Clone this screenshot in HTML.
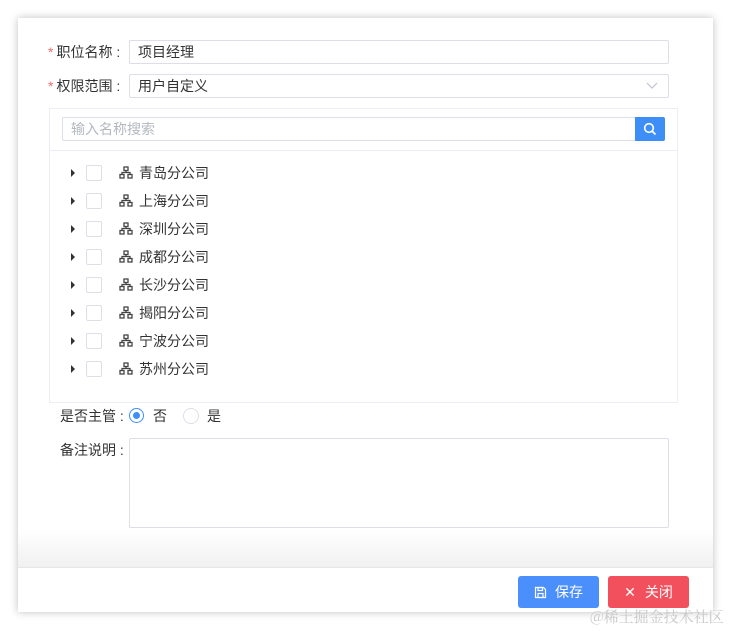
<!DOCTYPE html><html><head><meta charset="utf-8"><style>
body{margin:0;width:733px;height:631px;background:#fff;font-family:"Liberation Sans","Noto Sans CJK SC",sans-serif;font-size:14px;color:#333;position:relative;overflow:hidden}
.panel{position:absolute;left:18px;top:18px;width:695px;height:594px;background:#fff;box-shadow:0 0 8px rgba(0,0,0,.25)}
.a{position:absolute}
.lbl{position:absolute;font-size:14px;color:#333;line-height:24px}
.st{color:#f56c6c;margin-right:3px}
.inp{position:absolute;border:1px solid #dcdfe6;border-radius:2px;box-sizing:border-box;background:#fff;line-height:22px;padding-left:8px;font-size:14px}
.row{position:absolute;left:0;height:28px;line-height:28px}
.tri{position:absolute;left:71px;top:10px;width:0;height:0;border-left:4px solid #333;border-top:4px solid transparent;border-bottom:4px solid transparent}
.cb{position:absolute;left:86px;top:6px;width:14px;height:14px;border:1px solid #dcdfe6;border-radius:2px;background:#fff}
.ic{position:absolute;left:119px;top:7px}
.tx{position:absolute;left:139px;top:0;font-size:14px}
.btn{position:absolute;top:576px;height:32px;width:81px;border-radius:3px;color:#fff;font-size:14px;line-height:32px;text-align:center}
</style></head><body>
<div class="panel"></div>
<div class="a" style="left:18px;top:530px;width:695px;height:38px;background:linear-gradient(#fff,#f0f0f0)"></div>
<div class="a" style="left:18px;top:567px;width:695px;height:1px;background:#e6e6e6"></div>

<div class="lbl" style="left:48px;top:40px"><span class="st">*</span>职位名称 :</div>
<div class="inp" style="left:129px;top:40px;width:540px;height:24px">项目经理</div>
<div class="lbl" style="left:48px;top:74px"><span class="st">*</span>权限范围 :</div>
<div class="inp" style="left:129px;top:74px;width:540px;height:24px">用户自定义</div>
<svg class="a" style="left:646px;top:81px" width="12" height="10"><path d="M1 2l5 5 5-5" fill="none" stroke="#c0c4cc" stroke-width="1.2"/></svg>

<div class="a" style="left:49px;top:108px;width:629px;height:295px;border:1px solid #ebeef5;box-sizing:border-box"></div>
<div class="a" style="left:50px;top:150px;width:627px;height:1px;background:#ebeef5"></div>
<div class="inp" style="left:62px;top:117px;width:574px;height:24px;color:#b4b8bf">输入名称搜索</div>
<div class="a" style="left:635px;top:117px;width:30px;height:24px;background:#3e8ef7;border-radius:0 2px 2px 0"></div>
<svg class="a" style="left:643px;top:122px" width="14" height="14"><circle cx="6" cy="6" r="4.3" fill="none" stroke="#fff" stroke-width="1.6"/><path d="M9 9l3.5 3.5" stroke="#fff" stroke-width="1.8"/></svg>

<div id="tree"></div>
<script>
var n=["青岛","上海","深圳","成都","长沙","揭阳","宁波","苏州"],h="";
n.forEach(function(s,i){h+='<div class="row" style="top:'+(159+i*28)+'px;width:700px"><div class="tri"></div><div class="cb"></div><svg class="ic" width="14" height="13"><g fill="none" stroke="#444" stroke-width="1.3"><rect x="5" y="1" width="4" height="3.5"/><rect x="1" y="8.5" width="4" height="3.5"/><rect x="9" y="8.5" width="4" height="3.5"/><path d="M7 4.5v2M3 8.5V6.5h8v2"/></g></svg><div class="tx">'+s+'分公司</div></div>'});
document.getElementById("tree").innerHTML=h;
</script>

<div class="lbl" style="left:60px;top:404px">是否主管 :</div>
<div class="a" style="left:129px;top:408px;width:15px;height:15px;border:1px solid #3e8ef7;border-radius:50%;box-sizing:border-box;background:#fff"></div>
<div class="a" style="left:133px;top:412px;width:7px;height:7px;border-radius:50%;background:#3e8ef7"></div>
<div class="lbl" style="left:153px;top:404px">否</div>
<div class="a" style="left:183px;top:408px;width:16px;height:16px;border:1px solid #dcdfe6;border-radius:50%;box-sizing:border-box"></div>
<div class="lbl" style="left:207px;top:404px">是</div>

<div class="lbl" style="left:60px;top:438px">备注说明 :</div>
<div class="inp" style="left:129px;top:438px;width:540px;height:90px"></div>

<div class="btn" style="left:518px;background:#4a8ffc"><svg width="13" height="13" style="vertical-align:-2px;margin-right:8px"><g fill="none" stroke="#fff" stroke-width="1.2"><path d="M1.5 1.5h8l2 2v8h-10z"/><rect x="4" y="1.5" width="4.5" height="3"/><rect x="4" y="7.5" width="5" height="4"/></g></svg>保存</div>
<div class="btn" style="left:608px;background:#f2505c"><span style="margin-right:9px">✕</span>关闭</div>
<div class="a" style="left:590px;top:606px;font-family:'Noto Serif CJK SC',serif;font-size:15px;color:#c8c8c8">@稀土掘金技术社区</div>
</body></html>
